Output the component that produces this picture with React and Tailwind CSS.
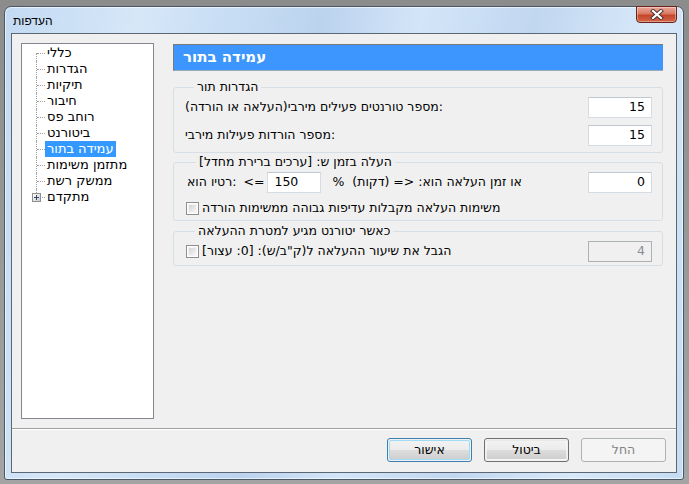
import React from "react";

function Checkbox() {
  return (
    <span className="inline-block w-[13px] h-[13px] border border-[#8f8f8f] bg-white p-px shrink-0">
      <span className="block w-full h-full bg-gradient-to-br from-[#d4d4d4] to-[#f7f7f7] border border-[#f4f4f4]" />
    </span>
  );
}

function NumBox({ value, className = "", disabled = false, left = false }) {
  return (
    <div
      className={
        (disabled
          ? "border border-[#adb2b5] bg-[#f0f0f0] text-[#8b8b9b] "
          : "border border-[#d5dce4] border-t-[#c0c7cf] bg-white text-black ") +
        (left ? "justify-start pl-[6px] " : "justify-end pr-[6px] ") +
        "h-[21px] flex items-center shrink-0 " +
        className
      }
    >
      {value}
    </div>
  );
}

function TreeRow({ label, first, last, selected, plus }) {
  return (
    <div className="flex h-[16px] items-center">
      <div className="relative w-[23px] h-full shrink-0">
        {first && <div className="absolute left-[14px] top-[8px] bottom-0 border-l border-dotted border-[#a0a0a0]" />}
        {!first && !last && <div className="absolute left-[14px] top-0 bottom-0 border-l border-dotted border-[#a0a0a0]" />}
        {last && <div className="absolute left-[14px] top-0 h-[8px] border-l border-dotted border-[#a0a0a0]" />}
        <div className="absolute left-[15px] top-[8px] w-[8px] border-t border-dotted border-[#a0a0a0]" />
        {plus && (
          <svg className="absolute left-[10px] top-[4px]" width="9" height="9" viewBox="0 0 9 9">
            <defs>
              <linearGradient id="pg" x1="0" y1="0" x2="1" y2="1">
                <stop offset="0" stopColor="#ffffff" />
                <stop offset="1" stopColor="#c8c8c8" />
              </linearGradient>
            </defs>
            <rect x="0.5" y="0.5" width="8" height="8" fill="url(#pg)" stroke="#8e8f8f" />
            <path d="M2 4.5H7M4.5 2V7" stroke="#2c4a7a" strokeWidth="1" />
          </svg>
        )}
      </div>
      <span
        className={
          selected
            ? "bg-[#3399ff] text-white px-[2px] leading-[16px] whitespace-nowrap"
            : "px-[2px] leading-[16px] whitespace-nowrap text-black"
        }
      >
        {label}
      </span>
    </div>
  );
}

function Button({ children, variant }) {
  if (variant === "default") {
    return (
      <div className="w-[85px] h-[24px] rounded-[3px] border border-[#3c7fb1] p-px">
        <div className="w-full h-full rounded-[2px] border border-[#9fdcf8] flex items-center justify-center bg-[linear-gradient(to_bottom,#f2f2f2_0%,#ebebeb_50%,#dddddd_51%,#cfcfcf_100%)] text-black">
          {children}
        </div>
      </div>
    );
  }
  if (variant === "disabled") {
    return (
      <div className="w-[85px] h-[24px] rounded-[3px] border border-[#adb2b5] bg-[#f4f4f4] flex items-center justify-center text-[#838383]">
        {children}
      </div>
    );
  }
  return (
    <div className="w-[85px] h-[24px] rounded-[3px] border border-[#707070] p-px">
      <div className="w-full h-full rounded-[2px] border border-[#fafafa]/60 flex items-center justify-center bg-[linear-gradient(to_bottom,#f2f2f2_0%,#ebebeb_50%,#dddddd_51%,#cfcfcf_100%)] text-black">
        {children}
      </div>
    </div>
  );
}

function Group({ title, className = "", children }) {
  return (
    <fieldset className={"border border-[#d5dfe5] rounded-[3px] mx-0 " + className}>
      <legend className="ml-[9px] px-[3px] leading-[14px] text-black whitespace-nowrap">{title}</legend>
      {children}
    </fieldset>
  );
}

export default function App() {
  const tree = [
    "כללי",
    "הגדרות",
    "תיקיות",
    "חיבור",
    "רוחב פס",
    "ביטורנט",
    "עמידה בתור",
    "מתזמן משימות",
    "ממשק רשת",
    "מתקדם",
  ];
  return (
    <div className="w-[689px] h-[484px] bg-[linear-gradient(to_bottom,#8c8c8c,#a4a4a4)] pl-[4px] pt-[6px] font-['DejaVu_Sans',sans-serif] text-[12.5px] overflow-hidden">
      <div className="w-[680px] h-[474px] rounded-t-[7px] rounded-b-[3px] border border-[#4a5866] bg-[linear-gradient(100deg,#c3daf3_0%,#d6e7f8_18%,#c7ddf4_30%,#bcd3ee_42%,#d3e5f8_55%,#c1d7f0_70%,#d7e8f9_85%,#c6dcf3_100%)] flex flex-col px-[6px] shadow-[inset_0_0_0_1px_rgba(255,255,255,0.6)]">
        <div className="h-[26px] flex items-start justify-between shrink-0">
          <span className="mt-[7px] ml-[2px] font-['Liberation_Sans',sans-serif] text-[12px] text-black leading-[14px]">העדפות</span>
          <div className="w-[41px] h-[17px] -mt-px rounded-b-[4px] border border-[#6b2419] bg-[linear-gradient(to_bottom,#e9a99b_0%,#d97a62_45%,#c4462b_55%,#d3664a_100%)] flex items-center justify-center shadow-[inset_0_0_0_1px_rgba(255,255,255,0.35)]">
            <svg width="14" height="11" viewBox="0 0 14 11">
              <path d="M3 2L11 9M11 2L3 9" stroke="#4a3030" strokeWidth="4" strokeLinecap="square" />
              <path d="M3 2L11 9M11 2L3 9" stroke="#ffffff" strokeWidth="2.2" strokeLinecap="square" />
            </svg>
          </div>
        </div>
        <div className="w-[666px] h-[440px] border border-[#5b6774] bg-[#f0f0f0] flex flex-col shrink-0">
          <div className="flex pl-[9px] pt-[9px]">
            <div className="w-[133px] h-[376px] border border-[#828790] bg-white pt-px shrink-0 text-[13px]">
              {tree.map((t, i) => (
                <TreeRow key={t} label={t} first={i === 0} last={i === tree.length - 1} selected={i === 6} plus={i === tree.length - 1} />
              ))}
            </div>
            <div className="w-[490px] ml-[19px] flex flex-col">
              <div className="mt-px h-[27px] border-t border-l border-[#7a7a7a] border-b border-b-[#9ab] bg-[#3d96fd] text-white font-bold text-[15px] flex items-center pl-[9px]">
                עמידה בתור
              </div>
              <Group title="הגדרות תור" className="mt-[9px] pl-[11px] pr-[10px] pt-[3px] pb-[6px]">
                <div className="flex items-center h-[21px]">
                  <span className="whitespace-nowrap">מספר טורנטים פעילים מירבי(העלאה או הורדה):</span>
                  <NumBox value="15" className="ml-auto w-[64px]" />
                </div>
                <div className="flex items-center h-[21px] mt-[7px]">
                  <span className="whitespace-nowrap">מספר הורדות פעילות מירבי:</span>
                  <NumBox value="15" className="ml-auto w-[64px]" />
                </div>
              </Group>
              <Group title="העלה בזמן ש: [ערכים ברירת מחדל]" className="mt-[2px] pl-[13px] pr-[10px] pt-[3px] pb-[4px]">
                <div className="flex items-center h-[21px]">
                  <span className="whitespace-nowrap">רטיו הוא:</span>
                  <span className="ml-[7px]">&lt;=</span>
                  <NumBox value="150" left className="ml-[3px] w-[54px]" />
                  <span className="ml-[11px]">%</span>
                  <span className="ml-[8px] whitespace-nowrap">או זמן העלאה הוא: &lt;= (דקות)</span>
                  <NumBox value="0" className="ml-auto w-[64px]" />
                </div>
                <div className="flex items-center h-[16px] mt-[7px] -ml-px">
                  <Checkbox />
                  <span className="ml-[3px] whitespace-nowrap">משימות העלאה מקבלות עדיפות גבוהה ממשימות הורדה</span>
                </div>
              </Group>
              <Group title="כאשר יטורנט מגיע למטרת ההעלאה" className="mt-[3px] pl-[12px] pr-[10px] pt-[3px] pb-[3px]">
                <div className="flex items-center h-[21px]">
                  <Checkbox />
                  <span className="ml-[3px] whitespace-nowrap">הגבל את שיעור ההעלאה ל(ק"ב/ש): [0: עצור]</span>
                  <NumBox value="4" disabled className="ml-auto w-[64px]" />
                </div>
              </Group>
            </div>
          </div>
          <div className="mt-[9px] h-px bg-[#a0a0a0] shrink-0" />
          <div className="h-px bg-white shrink-0" />
          <div className="mt-[8px] flex justify-end gap-[12px] pr-[10px]">
            <Button variant="default">אישור</Button>
            <Button>ביטול</Button>
            <Button variant="disabled">החל</Button>
          </div>
        </div>
      </div>
    </div>
  );
}
